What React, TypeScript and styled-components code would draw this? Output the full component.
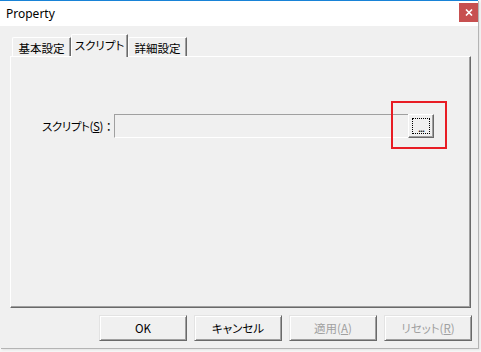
import React from "react";
import styled, { createGlobalStyle } from "styled-components";

const GlobalStyle = createGlobalStyle`
  html, body {
    margin: 0;
    padding: 0;
    background: #f6f6f6;
  }
  body {
    width: 481px;
    height: 352px;
    overflow: hidden;
    font-family: "Noto Sans CJK JP", "Noto Sans", sans-serif;
    font-size: 11.5px;
    color: #000000;
    font-feature-settings: "palt";
  }
`;

const Window = styled.div`
  width: 478px;
  height: 348px;
  box-sizing: border-box;
  background: #f0f0f0;
  border-top: 1px solid #1883d7;
  box-shadow: 1px 1px 0 #b4b4b4, 2px 2px 2px rgba(0, 0, 0, 0.08);
  display: flex;
  flex-direction: column;
`;

const TitleBar = styled.div`
  height: 25px;
  background: #ffffff;
  display: flex;
  align-items: flex-start;
  justify-content: space-between;
`;

const Title = styled.div`
  font-family: "Noto Sans", "Open Sans", sans-serif;
  font-size: 12px;
  line-height: 25px;
  padding-left: 6px;
  color: #000000;
`;

const CloseButton = styled.div`
  width: 19px;
  height: 19px;
  margin-top: 2px;
  background: #c75050;
  display: flex;
  align-items: center;
  justify-content: center;
`;

const Body = styled.div`
  flex: 1;
  display: flex;
  flex-direction: column;
  padding: 8px 0 0 10px;
`;

const TabRow = styled.div`
  display: flex;
  align-items: flex-end;
  margin-left: 2px;
  margin-bottom: -1px;
  position: relative;
  z-index: 1;
`;

const Tab = styled.div<{ $active?: boolean; $w: number }>`
  box-sizing: border-box;
  width: ${(p) => p.$w}px;
  height: ${(p) => (p.$active ? "23px" : "19px")};
  margin-bottom: ${(p) => (p.$active ? "0" : "1px")};
  padding-top: 2px;
  text-align: center;
  line-height: 16px;
  background: #f0f0f0;
  border-top: 1px solid #ffffff;
  border-left: 1px solid #ffffff;
  border-right: 1px solid #696969;
  border-top-left-radius: 2px;
  box-shadow: inset -1px 0 0 #a0a0a0;
  white-space: nowrap;
`;

const Panel = styled.div`
  width: 461px;
  height: 252px;
  box-sizing: border-box;
  border: 1px solid;
  border-color: #ffffff #696969 #696969 #ffffff;
  box-shadow: inset -1px -1px 0 #a0a0a0;
  padding: 57px 0 0 31px;
`;

const FieldRow = styled.div`
  display: flex;
  align-items: center;
  height: 24px;
`;

const Label = styled.div`
  width: 72px;
  flex-shrink: 0;
  line-height: 16px;
  letter-spacing: -0.4px;
  white-space: nowrap;
`;

const Colon = styled.span`
  font-feature-settings: normal;
  letter-spacing: 0;
`;

const U = styled.span`
  text-decoration: underline;
  text-underline-offset: 1px;
`;

const Field = styled.div`
  width: 294px;
  height: 24px;
  box-sizing: border-box;
  background: #f0f0f0;
  border-top: 1px solid #a0a0a0;
  border-left: 1px solid #a0a0a0;
  border-bottom: 1px solid #ffffff;
`;

const BrowseWrap = styled.div`
  position: relative;
`;

const BrowseButton = styled.div`
  width: 26px;
  height: 24px;
  box-sizing: border-box;
  background: #f0f0f0;
  border: 1px solid;
  border-color: #ffffff #696969 #696969 #ffffff;
  box-shadow: inset -1px -1px 0 #a0a0a0;
  padding: 3px;
`;

const FocusRect = styled.div`
  width: 100%;
  height: 100%;
  box-sizing: border-box;
  border: 1px dotted #000000;
  display: flex;
  align-items: flex-end;
  justify-content: center;
  font-size: 11px;
  line-height: 12px;
  letter-spacing: -1px;
`;

const Highlight = styled.div`
  position: absolute;
  left: -17px;
  top: -13px;
  width: 56px;
  height: 48px;
  box-sizing: border-box;
  border: 2px solid #e81c24;
  pointer-events: none;
`;

const Footer = styled.div`
  display: flex;
  justify-content: flex-end;
  gap: 7px;
  margin-top: 7px;
  padding-right: 6px;
`;

const Button = styled.div<{ $disabled?: boolean }>`
  width: 88px;
  height: 26px;
  box-sizing: border-box;
  background: #f0f0f0;
  border: 1px solid;
  border-color: #e3e3e3 #696969 #696969 #e3e3e3;
  box-shadow: inset 1px 1px 0 #ffffff, inset -1px -1px 0 #a0a0a0;
  display: flex;
  align-items: center;
  justify-content: center;
  line-height: 16px;
  color: ${(p) => (p.$disabled ? "#a0a0a0" : "#000000")};
`;

export default function App() {
  return (
    <>
      <GlobalStyle />
      <Window>
        <TitleBar>
          <Title>Property</Title>
          <CloseButton>
            <svg width="8" height="7" viewBox="0 0 8 7">
              <path d="M1 0.5 L7 6.5 M7 0.5 L1 6.5" stroke="#ffffff" strokeWidth="1.6" />
            </svg>
          </CloseButton>
        </TitleBar>
        <Body>
          <TabRow>
            <Tab $w={59}>基本設定</Tab>
            <Tab $w={57} $active>
              スクリプト
            </Tab>
            <Tab $w={59}>詳細設定</Tab>
          </TabRow>
          <Panel>
            <FieldRow>
              <Label>
                スクリプト(<U>S</U>)<Colon>：</Colon>
              </Label>
              <Field />
              <BrowseWrap>
                <BrowseButton>
                  <FocusRect>...</FocusRect>
                </BrowseButton>
                <Highlight />
              </BrowseWrap>
            </FieldRow>
          </Panel>
          <Footer>
            <Button>OK</Button>
            <Button>キャンセル</Button>
            <Button $disabled>
              適用(<U>A</U>)
            </Button>
            <Button $disabled>
              リセット(<U>R</U>)
            </Button>
          </Footer>
        </Body>
      </Window>
    </>
  );
}
